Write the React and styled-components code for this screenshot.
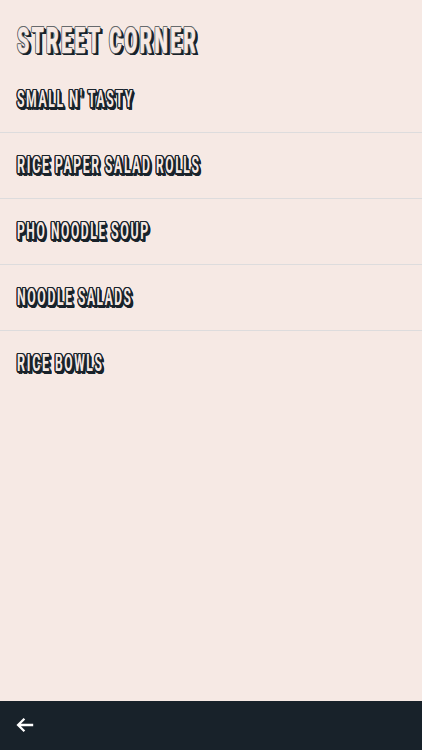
import React, { useLayoutEffect, useRef, useState } from "react";
import styled, { createGlobalStyle } from "styled-components";

const INK = "#18222a";
const PAPER = "#f6e9e4";

const GlobalStyle = createGlobalStyle`
  * {
    box-sizing: border-box;
  }
  body {
    margin: 0;
    background: ${PAPER};
    font-family: "Roboto", "Liberation Sans", sans-serif;
  }
`;

const Page = styled.div`
  display: flex;
  flex-direction: column;
  height: 100vh;
  overflow: hidden;
  background: ${PAPER};
  color: ${PAPER};
`;
const Content = styled.main`
  flex: 1;
  min-height: 0;
`;
const Title = styled.h1`
  display: flex;
  gap: 9px;
  height: 67px;
  margin: 0;
  padding: 22px 0 0 17px;
  font-size: 36px;
  line-height: 38px;
`;
const List = styled.ul`
  margin: 0;
  padding: 0;
  list-style: none;
`;
const Row = styled.li`
  height: 66px;
  border-bottom: 1px solid #dddcdd;
  &:last-child {
    border-bottom: 0;
  }
`;
const RowName = styled.h2`
  display: flex;
  gap: 6px;
  margin: 0;
  padding: 18px 0 0 17px;
  font-size: 24px;
  line-height: 28px;
`;
const WordBox = styled.span`
  display: block;
  flex: none;
  width: ${(props) => props.$width}px;
  white-space: nowrap;
`;
const titleShadow = `
  calc(-0.7px / var(--sx)) 0 #66696c,
  calc(0.5px / var(--sx)) -0.7px #66696c,
  calc(-0.5px / var(--sx)) -0.7px #66696c,
  calc(-0.5px / var(--sx)) 0.7px #55585c,
  calc(1px / var(--sx)) 0.5px ${INK},
  calc(1.6px / var(--sx)) 1px ${INK},
  calc(2.2px / var(--sx)) 1.7px ${INK},
  calc(2.8px / var(--sx)) 2.4px ${INK},
  calc(1px / var(--sx)) 2px ${INK}
`;
const rowShadow = `
  calc(-1px / var(--sx)) -1px ${INK},
  calc(-1.2px / var(--sx)) 0 ${INK},
  calc(-1px / var(--sx)) 1px ${INK},
  calc(-0.6px / var(--sx)) 2px ${INK},
  calc(1px / var(--sx)) -1px ${INK},
  0 -1.1px ${INK},
  calc(1.2px / var(--sx)) 0 ${INK},
  calc(1.8px / var(--sx)) 0.8px ${INK},
  calc(2.4px / var(--sx)) 1.6px ${INK},
  calc(1px / var(--sx)) 2.5px ${INK},
  calc(2.6px / var(--sx)) 2.6px ${INK}
`;
const Lettering = styled.span`
  display: inline-block;
  font-weight: ${(props) => (props.$large ? 900 : 700)};
  letter-spacing: ${(props) => (props.$large ? 4 : 3.2)}px;
  transform-origin: left center;
  transform: scaleX(var(--sx));
  text-shadow: ${(props) => (props.$large ? titleShadow : rowShadow)};
`;
const BottomBar = styled.nav`
  display: flex;
  align-items: center;
  flex: none;
  height: 49px;
  padding: 0 0 1px 13px;
  background: ${INK};
`;
const BackButton = styled.button`
  width: 24px;
  height: 24px;
  padding: 0;
  border: 0;
  background: none;
  color: #fff;
  svg {
    display: block;
  }
`;

// squeezes a word into its width, which gives the tall poster letters
function Word({ text, width, large }) {
  const ref = useRef(null);
  const [stretch, setStretch] = useState(0.6);

  useLayoutEffect(() => {
    const spacing = large ? 4 : 3.2;
    setStretch(width / (ref.current.offsetWidth - spacing));
  }, [text, width, large]);

  return (
    <WordBox $width={width}>
      <Lettering ref={ref} $large={large} style={{ "--sx": stretch }}>
        {text}
      </Lettering>
    </WordBox>
  );
}

const title = [
  ["STREET", 83],
  ["CORNER", 87],
];

const categories = [
  [["SMALL", 46], ["N'", 13], ["TASTY", 44]],
  [["RICE", 32], ["PAPER", 44], ["SALAD", 45], ["ROLLS", 43]],
  [["PHO", 28], ["NOODLE", 54], ["SOUP", 37]],
  [["NOODLE", 55], ["SALADS", 53]],
  [["RICE", 32], ["BOWLS", 47]],
];

function App() {
  return (
    <Page>
      <GlobalStyle />
      <Content>
        <Title>
          {title.map(([text, width]) => (
            <Word key={text} text={text} width={width} large />
          ))}
        </Title>
        <List>
          {categories.map((words) => (
            <Row key={words.map(([text]) => text).join(" ")}>
              <RowName>
                {words.map(([text, width]) => (
                  <Word key={text} text={text} width={width} />
                ))}
              </RowName>
            </Row>
          ))}
        </List>
      </Content>
      <BottomBar>
        <BackButton aria-label="Back">
          <svg width="24" height="24" viewBox="0 0 24 24" fill="none">
            <path
              d="M20.2 12H5.4M11.4 5.7L5.1 12l6.3 6.3"
              stroke="currentColor"
              strokeWidth="2.3"
            />
          </svg>
        </BackButton>
      </BottomBar>
    </Page>
  );
}

export default App;
